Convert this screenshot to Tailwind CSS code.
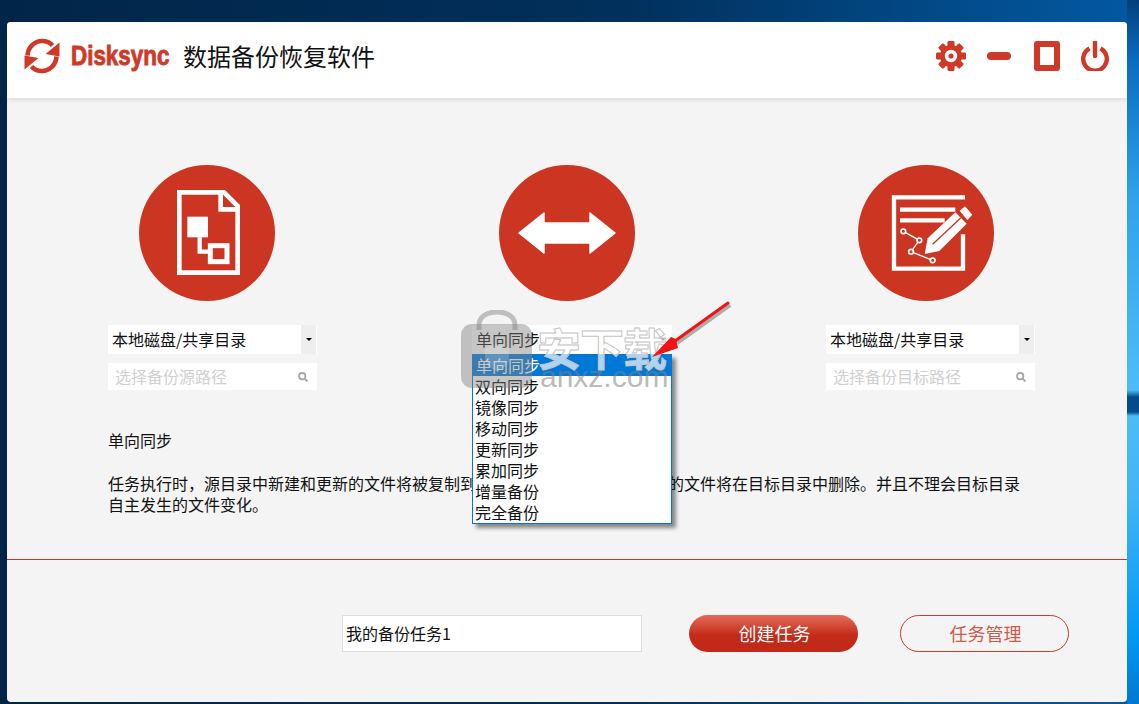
<!DOCTYPE html>
<html lang="zh">
<head>
<meta charset="utf-8">
<title>Disksync</title>
<script src="https://cdn.jsdelivr.net/npm/@tailwindcss/browser@4"></script>
</head>
<body class="m-0 overflow-hidden">
<div class="relative w-[1139px] h-[704px] overflow-hidden pt-[22px] pl-[7px] bg-[linear-gradient(90deg,#012548_0%,#01305c_55%,#024c8c_85%,#0359a3_100%)] font-['Noto_Sans_CJK_SC','Noto_Sans',sans-serif] text-[16px] leading-[21px] text-[#111]">
  <!-- wallpaper right side -->
  <div class="absolute right-0 top-0 w-[12px] h-full bg-[linear-gradient(180deg,#03407a_0px,#0a6cc0_60px,#2fa4ec_200px,#4dbdf8_390px,#054b8c_397px,#054b8c_412px,#4dbdf8_416px,#40b4f6_500px,#0098f4_640px,#0078cf_704px)]"></div>

  <!-- window -->
  <div class="relative w-[1120px] h-[680px] rounded-[4px] bg-[#f4f4f4] overflow-hidden flex flex-col">
    <!-- header -->
    <header class="relative h-[76px] shrink-0 bg-white shadow-[0_2px_5px_rgba(0,0,0,0.10)] flex items-center pl-[17px] pr-[18px] pb-[8px]">
      <svg class="w-[36px] h-[36px] shrink-0" viewBox="0 0 36 36" fill="none">
        <path d="M3.5 17.5C4 9 10.5 3 18 3c4.5 0 8 1.5 10.5 4.5" stroke="#cf3a28" stroke-width="4.6"/>
        <path d="M35.5 4.5V18.5L21.5 16Z" fill="#cf3a28"/>
        <path d="M32.5 18.5C32 27 25.5 33 18 33c-4.5 0-8-1.5-10.5-4.5" stroke="#cf3a28" stroke-width="4.6"/>
        <path d="M0.5 31.5V17.5L14.5 20Z" fill="#cf3a28"/>
      </svg>
      <div class="ml-[11px] w-[99px] shrink-0 overflow-visible">
        <span class="inline-block origin-left scale-x-[0.8] whitespace-nowrap font-['Liberation_Sans',sans-serif] font-bold text-[28px] leading-[30px] text-[#cf3a28] [-webkit-text-stroke:0.9px_#cf3a28]">Disksync</span>
      </div>
      <h1 class="ml-[13px] text-[24px] leading-[32px] font-normal text-[#111]">数据备份恢复软件</h1>
      <div class="ml-auto flex items-center">
        <svg class="w-[30px] h-[30px]" viewBox="0 0 30 30">
          <g fill="#cf3a28">
            <rect x="11.5" y="0" width="7" height="30" rx="1.2"/>
            <rect x="11.5" y="0" width="7" height="30" rx="1.2" transform="rotate(45 15 15)"/>
            <rect x="11.5" y="0" width="7" height="30" rx="1.2" transform="rotate(90 15 15)"/>
            <rect x="11.5" y="0" width="7" height="30" rx="1.2" transform="rotate(135 15 15)"/>
            <circle cx="15" cy="15" r="11"/>
          </g>
          <circle cx="15" cy="15" r="6.2" fill="#fff"/>
          <circle cx="15" cy="15" r="2.6" fill="#cf3a28"/>
        </svg>
        <div class="ml-[21px] w-[24px] h-[8px] rounded-full bg-[#cf3a28]"></div>
        <div class="ml-[23px] w-[26px] h-[30px] rounded-[3px] border-[6px] border-[#cf3a28]"></div>
        <svg class="ml-[21px] w-[28px] h-[30px]" viewBox="0 0 28 30" fill="none" stroke="#cf3a28" stroke-width="4.4">
          <path d="M8.5 7.5A11.8 11.8 0 1 0 19.5 7.5"/>
          <path d="M14 1V15" stroke-linecap="round"/>
        </svg>
      </div>
    </header>

    <!-- main -->
    <main class="relative flex-1 min-h-0 flex flex-col">
      <section class="h-[462px] shrink-0 border-b border-[#c9372a] pt-[67px] pl-[101px] box-border">
        <div class="flex">
          <!-- source -->
          <div class="w-[209px] shrink-0">
            <div class="ml-[31px] w-[136px] h-[136px] rounded-full bg-[#cb3522]">
              <svg class="w-[136px] h-[136px]" viewBox="27 30 408 408" fill="none">
                <path d="M148 112H282L323 153V353H148Z" stroke="#fff" stroke-width="14"/>
                <path d="M272 112V163H323" stroke="#fff" stroke-width="14"/>
                <rect x="172" y="185" width="62" height="62" fill="#fff"/>
                <path d="M209 247V290H240" stroke="#fff" stroke-width="13"/>
                <rect x="241" y="272" width="50" height="48" stroke="#fff" stroke-width="15"/>
              </svg>
            </div>
            <div class="mt-[24px] h-[29px] bg-white flex items-center pl-[4px]">
              <span class="flex-1">本地磁盘/共享目录</span>
              <span class="w-[16px] h-[29px] bg-[#eeeeee] border-r border-white flex items-center justify-center"><span class="w-0 h-0 border-x-[3px] border-x-transparent border-t-[3px] border-t-black"></span></span>
            </div>
            <div class="mt-[9px] h-[27px] bg-white flex items-center pl-[7px] pr-[9px] text-[#d0d0d0]">
              <span class="flex-1">选择备份源路径</span>
              <svg class="w-[10px] h-[10px]" viewBox="0 0 10 10" fill="none" stroke="#a8a8a8" stroke-width="1.8"><circle cx="4.2" cy="4.2" r="3.2"/><path d="M6.5 6.5L9.5 9.5"/></svg>
            </div>
          </div>
          <!-- mode -->
          <div class="ml-[155px] w-[200px] shrink-0">
            <div class="ml-[27px] w-[136px] h-[136px] rounded-full bg-[#cb3522]">
              <svg class="w-[136px] h-[136px]" viewBox="0 0 136 136"><path d="M20 68L45 48V58H91V48L116 68L91 88V78H45V88Z" fill="#fff" stroke="#fff" stroke-width="1.5" stroke-linejoin="round"/></svg>
            </div>
            <div class="mt-[24px] h-[29px] bg-white flex items-center pl-[4px]">
              <span class="flex-1">单向同步</span>
              <span class="mr-[6px] w-0 h-0 border-x-[3px] border-x-transparent border-t-[3px] border-t-black"></span>
            </div>
          </div>
          <!-- target -->
          <div class="ml-[154px] w-[209px] shrink-0">
            <div class="ml-[32px] w-[136px] h-[136px] rounded-full bg-[#cb3522]">
              <svg class="w-[136px] h-[136px]" viewBox="24 30 408 408" fill="none">
                <path d="M345 127H132V341H339V238" stroke="#fff" stroke-width="13"/>
                <path d="M150 164H316M150 196H284" stroke="#fff" stroke-width="13"/>
                <path d="M224 297L233 250L316 172L350 206L268 288Z" fill="#fff"/>
                <path d="M248 268L332 189" stroke="#cb3522" stroke-width="4"/>
                <path d="M329 167L345 154L367 179L352 195Z" fill="#fff"/>
                <path d="M160 229L208 256L183 290L248 316" stroke="#fff" stroke-width="4"/>
                <g fill="#cb3522" stroke="#fff" stroke-width="5"><circle cx="160" cy="229" r="7"/><circle cx="208" cy="256" r="7"/><circle cx="183" cy="290" r="7"/><circle cx="248" cy="316" r="7"/></g>
              </svg>
            </div>
            <div class="mt-[24px] h-[29px] bg-white flex items-center pl-[4px]">
              <span class="flex-1">本地磁盘/共享目录</span>
              <span class="w-[16px] h-[29px] bg-[#eeeeee] border-r border-white flex items-center justify-center"><span class="w-0 h-0 border-x-[3px] border-x-transparent border-t-[3px] border-t-black"></span></span>
            </div>
            <div class="mt-[9px] h-[27px] bg-white flex items-center pl-[7px] pr-[9px] text-[#d0d0d0]">
              <span class="flex-1">选择备份目标路径</span>
              <svg class="w-[10px] h-[10px]" viewBox="0 0 10 10" fill="none" stroke="#a8a8a8" stroke-width="1.8"><circle cx="4.2" cy="4.2" r="3.2"/><path d="M6.5 6.5L9.5 9.5"/></svg>
            </div>
          </div>
        </div>
        <div class="mt-[40px] w-[915px]">
          <p>单向同步</p>
          <p class="mt-[22px]">任务执行时，源目录中新建和更新的文件将被复制到目标目录，源目录中不存在的文件将在目标目录中删除。并且不理会目标目录自主发生的文件变化。</p>
        </div>
      </section>

      <section class="flex items-start pt-[55px] pl-[335px]">
        <div class="w-[300px] h-[37px] bg-white border border-[#dddddd] flex items-center pl-[3px]">我的备份任务1</div>
        <button class="ml-[47px] w-[169px] h-[37px] pl-[2px] rounded-full bg-[linear-gradient(180deg,#e66a5a_0%,#d24a38_30%,#c32a18_55%,#c02a18_100%)] text-white text-[18px]">创建任务</button>
        <button class="ml-[42px] w-[169px] h-[37px] pl-[2px] rounded-full border border-[#cc3a2a] text-[#cf5a4a] text-[18px]">任务管理</button>
      </section>

      <!-- dropdown list -->
      <ul class="absolute left-[465px] top-[256px] w-[200px] h-[170px] bg-white border border-[#0078d7] shadow-[4px_4px_4px_rgba(0,0,0,0.45)] leading-[21px] pl-[2px]">
        <li class="-ml-[2px] pl-[3px] h-[21px] bg-[#0078d7] text-white">单向同步</li>
        <li>双向同步</li>
        <li>镜像同步</li>
        <li>移动同步</li>
        <li>更新同步</li>
        <li>累加同步</li>
        <li>增量备份</li>
        <li>完全备份</li>
      </ul>

      <!-- download-site watermark -->
      <div class="absolute left-[454px] top-[212px] w-[72px] h-[78px] pointer-events-none">
        <svg class="w-[72px] h-[78px]" viewBox="0 0 72 78" fill="none">
          <path d="M18 20V15C18 6 27 2 36 2S54 6 54 15V20" stroke="#888" stroke-opacity=".5" stroke-width="5"/>
          <rect x="0" y="14" width="71" height="64" rx="11" fill="#808080" fill-opacity=".45"/>
          <path d="M36 34L48 38V48C48 55 42 59 36 61C30 59 24 55 24 48V38Z" fill="#fff" fill-opacity=".18"/>
        </svg>
      </div>
      <div class="absolute left-[530px] top-[224px] whitespace-nowrap text-[44px] leading-[50px] font-bold text-white/70 [-webkit-text-stroke:1px_#c4c4c4] tracking-[-1px] pointer-events-none">安下载</div>
      <div class="absolute left-[533px] top-[262px] whitespace-nowrap font-['Liberation_Sans',sans-serif] text-[30px] leading-[34px] text-[#808080]/55 pointer-events-none">anxz.com</div>

      <!-- annotation arrow -->
      <svg class="absolute left-[640px] top-[195px] w-[100px] h-[70px] pointer-events-none" viewBox="0 0 100 70">
        <path d="M83 12L30 50" stroke="#555" stroke-opacity=".45" stroke-width="4"/>
        <path d="M81 10L28 48" stroke="#f01414" stroke-width="3" stroke-linecap="round"/>
        <path d="M5 64L24 44L29 46L31 55Z" fill="#f01414"/>
      </svg>
    </main>
  </div>
</div>
</body>
</html>
